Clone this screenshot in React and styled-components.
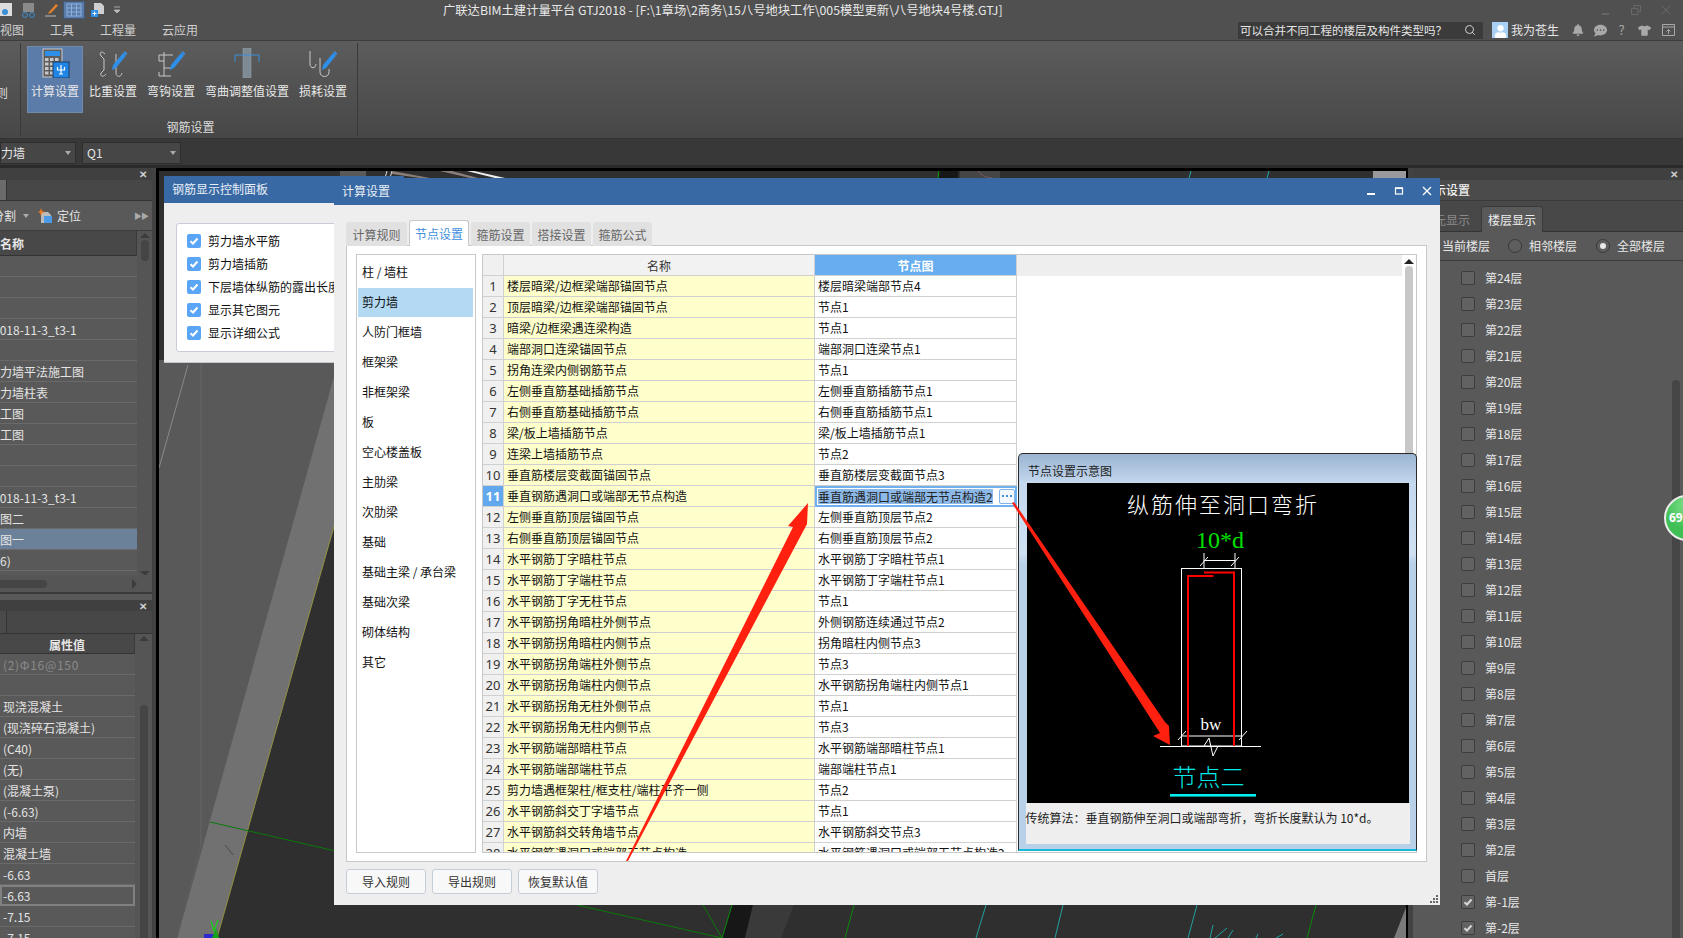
import React from 'react';
import styled, { createGlobalStyle } from 'styled-components';
import { Search } from 'lucide-react';
import { FaBell, FaCommentDots, FaTshirt, FaUser } from 'react-icons/fa';

const FONT = '"Noto Sans CJK SC", "Noto Sans", sans-serif';

const Global = createGlobalStyle`
  html, body { margin: 0; padding: 0; background: #2f2f2f; }
  body { font-family: ${FONT}; font-size: 12px; }
  * { box-sizing: border-box; }
`;

const Page = styled.div`
  position: relative; width: 1683px; height: 938px; overflow: hidden;
  display: flex; flex-direction: column; background: #2f2f2f; color: #e4e4e4;
  font-size: 12px; line-height: 16px;
`;

/* ---------- title bar ---------- */
const TitleBar = styled.div`
  height: 20px; background: #505050; position: relative; display: flex; align-items: center; justify-content: space-between;
`;
const QuickIcons = styled.div`display: flex; align-items: center; height: 20px;`;
const QuickBtn = styled.div`
  width: ${p => p.$w || 20}px; height: 18px; margin-left: ${p => p.$ml || 0}px; display: flex; align-items: center; justify-content: center;
  background: ${p => p.$on ? '#5b7ba8' : 'transparent'};
  border: ${p => p.$on ? '1px solid #3f5878' : '0'};
`;
const AppTitle = styled.div`
  position: absolute; left: 443px; top: 1px; white-space: nowrap; color: #e8e8e8; font-size: 12.3px; line-height: 18px;
`;
const WinGhost = styled.div`display: flex; gap: 20px; padding-right: 12px; align-items: center;`;

/* ---------- menu ---------- */
const MenuBar = styled.div`
  height: 21px; background: #505050; border-bottom: 1px solid #3c3c3c; display: flex; align-items: center; justify-content: space-between; padding-right: 5px;
`;
const MenuItems = styled.div`display: flex; gap: 26px;`;
const MenuItem = styled.span`color: #cfcfcf; font-size: 12px;`;
const MenuRight = styled.div`display: flex; align-items: center; height: 20px;`;
const SearchBox = styled.div`
  width: 245px; height: 17px; background: #3b3b3b; display: flex; align-items: center; justify-content: space-between; padding: 0 7px 0 2px; color: #e6e6e6; font-size: 11.5px;
`;
const Avatar = styled.div`
  width: 16px; height: 16px; margin-left: 9px; background: #a8d0f4; display: flex; align-items: flex-end; justify-content: center; color: #fff; overflow: hidden;
`;
const UserName = styled.span`margin-left: 3px; color: #e6e6e6; width: 48px; margin-right: 7px;`;
const RightIcon = styled.div`
  width: ${p => p.$w}px; display: flex; justify-content: center; align-items: center; color: #a9a9a9; font-size: 13px;
`;

/* ---------- ribbon ---------- */
const Ribbon = styled.div`
  height: 98px; background: linear-gradient(#5c5c5c, #474747); display: flex; padding-top: 2px; border-bottom: 1px solid #333;
`;
const RibbonStub = styled.div`
  width: 21px; height: 93px; border-right: 1px solid #3a3a3a; padding-top: 42px; overflow: hidden; color: #ddd; white-space: nowrap;
`;
const StubText = styled.span`margin-left: -4px; display: block;`;
const RibbonGroup = styled.div`
  height: 93px; border-right: 1px solid #3a3a3a; padding: 3px 6px 0 6px; display: flex; flex-direction: column; align-items: center;
`;
const RibbonBtns = styled.div`display: flex; gap: 2px;`;
const RibbonBtn = styled.div`
  width: ${p => p.$w || 56}px; height: 67px; display: flex; flex-direction: column; align-items: center; padding-top: 1px;
  background: ${p => p.$on ? '#5b7ba8' : 'transparent'};
  border: 1px solid ${p => p.$on ? '#7189ab' : 'transparent'};
  color: #e8e8e8;
`;
const RibbonLabel = styled.span`margin-top: 5px; white-space: nowrap;`;
const GroupLabel = styled.span`margin: 6px 0 0 3px; color: #dcdcdc;`;

/* ---------- toolbar ---------- */
const ToolRow = styled.div`
  height: 29px; background: #383838; border-bottom: 3px solid #2a2a2a; display: flex; gap: 6px; padding-top: 3px;
`;
const Combo = styled.div`
  width: ${p => p.$w}px; height: 22px; background: #464646; border: 1px solid #2e2e2e; display: flex; align-items: center; justify-content: space-between; padding: 0 4px; overflow: hidden; color: #e4e4e4; white-space: nowrap;
`;
const Clip = styled.span`margin-left: ${p => p.$shift || 0}px; white-space: nowrap;`;
const Caret = styled.i`
  width: 0; height: 0; border-left: 3px solid transparent; border-right: 3px solid transparent; border-top: 4px solid #aaa; flex: none;
`;

/* ---------- workspace ---------- */
const Workspace = styled.div`flex: 1; display: flex; min-height: 0;`;
const LeftDock = styled.div`width: 152px; display: flex; flex-direction: column; background: #595959;`;
const Splitter = styled.div`width: ${p => p.$w}px; background: #424242; flex: none;`;
const Viewport = styled.div`
  width: 1252px; flex: none; background: #000; border-left: 3px solid #000; border-right: 2px solid #000;
  svg { display: block; width: 1247px; height: 770px; }
`;
const RightDock = styled.div`width: 270px; display: flex; flex-direction: column; background: #595959; position: relative;`;

const DockPanel = styled.div`
  height: ${p => p.$h ? p.$h + 'px' : 'auto'}; flex: ${p => p.$h ? 'none' : 1}; display: flex; flex-direction: column; min-height: 0; overflow: hidden;
  border-bottom: ${p => p.$h ? '2px solid #3a3a3a' : '0'};
`;
const DockHead = styled.div`
  height: ${p => p.$h || 12}px; background: #404040; display: flex; align-items: center; justify-content: flex-end; padding-right: 5px; flex: none; margin-top: ${p => p.$mt || 0}px;
`;
const CloseGlyph = styled.span`color: #d0d0d0; font-size: 10px; line-height: 10px; font-weight: 700;`;
const TabStrip = styled.div`
  height: 21px; background: #474747; border-bottom: 1px solid #333; flex: none; display: flex;
`;
const StripCell = styled.div`width: ${p => p.$w}px; background: ${p => p.$c}; border-right: 1px solid #333;`;
const LocRow = styled.div`
  height: 30px; flex: none; display: flex; align-items: center; background: #595959; border-bottom: 1px solid #3c3c3c; padding-right: 4px; color: #e4e4e4; position: relative;
`;
const LocIcon = styled.span`margin-left: 9px; display: flex;`;
const LocLabel = styled.span`margin-left: 4px;`;
const Chevrons = styled.span`margin-left: auto; color: #aaa; font-size: 8px; letter-spacing: -1px;`;
const TableWrap = styled.div`flex: 1; display: flex; min-height: 0;`;
const RowsCol = styled.div`width: ${p => p.$w}px; flex: none; overflow: hidden; display: flex; flex-direction: column;`;
const HeadCell = styled.div`
  height: ${p => p.$h}px; flex: none; background: #484848; border-bottom: 1px solid #333; border-right: 1px solid #3a3a3a; display: flex; align-items: center; font-weight: 700; color: #e6e6e6; padding-top: 2px;
  justify-content: ${p => p.$center ? 'center' : 'flex-start'};
`;
const DockRow = styled.div`
  height: 21px; flex: none; display: flex; align-items: center; white-space: nowrap; overflow: hidden;
  border-bottom: 1px solid #6a6a6a; color: ${p => p.$dim ? '#8a8a8a' : '#e4e4e4'};
  background: ${p => p.$sel ? '#6b8099' : 'transparent'};
  outline: ${p => p.$box ? '2px solid #808080' : '0'}; outline-offset: -2px;
  padding: 2px 0 0 ${p => p.$pl || 0}px;
  letter-spacing: ${p => p.$dim ? '.7px' : '0'};
`;
const VScroll = styled.div`width: 15px; flex: none; display: flex; flex-direction: column; align-items: center; padding-top: 2px; background: #555;`;
const ArrowUp = styled.i`
  width: 0; height: 0; border-left: 5px solid transparent; border-right: 5px solid transparent; border-bottom: 5px solid ${p => p.$c || '#3c3c3c'}; flex: none;
`;
const ArrowDown = styled.i`
  width: 0; height: 0; border-left: 5px solid transparent; border-right: 5px solid transparent; border-top: 5px solid #3c3c3c; flex: none; margin-top: ${p => p.$mt}px;
`;
const Thumb = styled.div`
  width: 8px; height: ${p => p.$h}px; margin-top: ${p => p.$mt}px; background: ${p => p.$c || '#454545'}; border-radius: 4px; flex: none;
`;
const HScroll = styled.div`
  height: 17px; flex: none; background: #555; display: flex; align-items: center; justify-content: space-between; padding: 0 15px 0 0;
`;
const HThumb = styled.div`width: 47px; height: 8px; background: #454545; border-radius: 0 4px 4px 0;`;
const ArrowRight = styled.i`
  width: 0; height: 0; border-top: 5px solid transparent; border-bottom: 5px solid transparent; border-left: 5px solid #3c3c3c;
`;

/* right dock */
const RDTitle = styled.div`
  height: 21px; flex: none; background: #4b4b4b; border-bottom: 1px solid #3a3a3a; padding-left: 21px; display: flex; align-items: center; color: #f0f0f0; font-weight: 500;
`;
const RDTabs = styled.div`
  height: 31px; flex: none; background: #484848; border-bottom: 1px solid #333; display: flex; align-items: flex-end; padding-left: 21px;
`;
const RDTab = styled.div`
  height: ${p => p.$on ? 26 : 25}px; width: ${p => p.$w}px; display: flex; align-items: center; justify-content: ${p => p.$on ? 'center' : 'flex-start'};
  color: ${p => p.$on ? '#eee' : '#8a8a8a'}; background: ${p => p.$on ? '#595959' : 'transparent'};
  border: ${p => p.$on ? '1px solid #3a3a3a' : '0'}; border-bottom: 0; border-radius: 3px 3px 0 0;
  margin-bottom: -1px;
`;
const RDOptions = styled.div`
  height: 29px; flex: none; border-bottom: 1px solid #3a3a3a; display: flex; align-items: center; padding-left: 29px; color: #e8e8e8;
`;
const Radio = styled.span`
  width: 14px; height: 14px; border-radius: 50%; border: 1px solid #3a3a3a; background: #5e5e5e; margin: 0 7px 0 ${p => p.$ml}px; display: flex; align-items: center; justify-content: center; flex: none;
  &::after { content: ''; width: 6px; height: 6px; border-radius: 50%; background: ${p => p.$on ? '#e8e8e8' : 'transparent'}; }
`;
const RDBody = styled.div`flex: 1; display: flex; min-height: 0;`;
const FloorList = styled.div`width: 259px; padding: 4px 0 0 48px; display: flex; flex-direction: column;`;
const FloorRow = styled.div`height: 26px; flex: none; display: flex; align-items: center; color: #e8e8e8;`;
const FloorBox = styled.span`
  width: 14px; height: 14px; border: 1px solid #3d3d3d; border-radius: 2px; background: #626262; margin-right: 10px; display: flex; align-items: center; justify-content: center; flex: none;
`;
const RDScroll = styled.div`width: 11px; flex: none; padding-top: 119px;`;
const RDThumb = styled.div`width: 8px; height: 100%; background: #464646; border-radius: 4px 4px 0 0;`;

/* ---------- floating windows ---------- */
const CtrlPanel = styled.div`
  position: absolute; left: 164px; top: 176px; width: 240px; height: 187px; background: #eeeeee; display: flex; flex-direction: column;
  border-bottom: 1px solid #c4c8d0;
`;
const WinTitle = styled.div`
  height: 27px; flex: none; background: #3869a4; color: #e8eef6; display: flex; align-items: center; justify-content: space-between; font-size: 12px;
  padding: 0 ${p => p.$pr || 0}px 2px 8px;
`;
const CtrlBox = styled.div`
  margin: 20px 0 0 12px; height: 129px; background: #fff; border: 1px solid #c8ccd6; border-radius: 3px; padding: 9px 0 0 10px; display: flex; flex-direction: column; gap: 7px; overflow: hidden;
`;
const CtrlRow = styled.div`height: 16px; display: flex; align-items: center; color: #111; white-space: nowrap;`;
const BlueCheck = styled.span`
  width: 14px; height: 14px; background: #5aa5f5; border-radius: 2px; margin-right: 7px; display: flex; align-items: center; justify-content: center; flex: none;
`;

const Dialog = styled.div`
  position: absolute; left: 334px; top: 178px; width: 1106px; height: 727px; background: #eeeeee; display: flex; flex-direction: column;
`;
const WinCtrls = styled.div`display: flex; align-items: center; gap: 18px; padding-right: 8px;`;
const TabRow = styled.div`display: flex; gap: 2px; padding: 15px 0 0 12px; height: 40px; flex: none; align-items: flex-end;`;
const Tab = styled.div`
  width: ${p => p.$w || 59}px; height: ${p => p.$on ? 26 : 24}px; display: flex; align-items: center; justify-content: center;
  background: ${p => p.$on ? '#fff' : '#e1e1e1'}; color: ${p => p.$on ? '#3f8fdc' : '#666'};
  border: 1px solid ${p => p.$on ? '#c8c8c8' : '#e1e1e1'}; border-bottom: 0; border-radius: 3px 3px 0 0; margin-bottom: -1px; position: relative; z-index: ${p => p.$on ? 1 : 0};
`;
const TabBody = styled.div`
  margin: 0 13px 0 12px; height: 617px; flex: none; background: #fff; border: 1px solid #c8c8c8; padding: 8px 9px 8px 9px; display: flex; gap: 6px;
`;
const SideList = styled.div`
  width: 120px; flex: none; border: 1px solid #c8c8c8; padding: 2px 2px 0 1px; display: flex; flex-direction: column; color: #111;
`;
const SideItem = styled.div`
  height: 30px; flex: none; display: flex; align-items: center; padding-left: 4px; white-space: nowrap; background: ${p => p.$on ? 'linear-gradient(transparent 1px, #b3d9f3 1px)' : 'transparent'};
`;
const GridFrame = styled.div`
  flex: 1; border: 1px solid #c8c8c8; display: flex; overflow: hidden; min-width: 0;
`;
const GridArea = styled.div`flex: 1; overflow: hidden; display: flex; flex-direction: column; min-width: 0;`;
const GridRow = styled.div`
  display: grid; grid-template-columns: 21px 311px 202px 1fr; height: 21px; flex: none;
`;
const IdxCell = styled.div`
  background: ${p => p.$on ? '#62a8ee' : '#f0f0f0'}; color: ${p => p.$on ? '#fff' : '#333'}; font-weight: ${p => p.$on ? 700 : 400}; font-size: 13px;
  border-right: 1px solid #d0d0d0; border-bottom: 1px solid #d0d0d0; display: flex; align-items: center; justify-content: center; font-family: "Noto Sans", sans-serif;
`;
const NameCell = styled.div`
  background: #ffffcc; color: #111; border-right: 1px solid #d0d0d0; border-bottom: 1px solid #d0d0d0; display: flex; align-items: center; padding-left: 3px; white-space: nowrap; overflow: hidden;
`;
const NodeCell = styled.div`
  background: #fff; color: #111; border-right: 1px solid #d0d0d0; border-bottom: 1px solid #d0d0d0; display: flex; align-items: center; padding-left: 3px; white-space: nowrap; overflow: hidden;
`;
const NodeEdit = styled.div`
  background: #fff; border: 2px solid #6fb0ee; display: flex; align-items: center; padding-left: 1px; white-space: nowrap; overflow: hidden; color: #222; justify-content: space-between;
`;
const Highlight = styled.span`background: #8cb9e8; line-height: 15px;`;
const DotsBtn = styled.span`
  width: 16px; height: 15px; border: 1px solid #7fb5ea; border-radius: 2px; background: #f4f9ff; display: flex; align-items: center; justify-content: center; flex: none;
`;
const HeadName = styled.div`
  background: #f2f2f2; color: #333; border-right: 1px solid #d0d0d0; border-bottom: 1px solid #d0d0d0; display: flex; align-items: center; justify-content: center; padding-top: 1px;
`;
const HeadNode = styled.div`
  background: #66aef0; color: #fff; font-weight: 700; border-right: 1px solid #d0d0d0; border-bottom: 1px solid #d0d0d0; display: flex; align-items: center; justify-content: center; padding-top: 1px;
`;
const HeadRest = styled.div`background: #eeeeee; margin-right: 0;`;
const GridScroll = styled.div`width: 14px; flex: none; display: flex; flex-direction: column; align-items: center; padding-top: 4px; background: #fff;`;
const BtnRow = styled.div`display: flex; gap: 6px; padding: 7px 0 0 12px;`;
const ActionBtn = styled.div`
  width: 80px; height: 25px; background: #f8f8f8; border: 1px solid #c5cdd8; border-radius: 3px; display: flex; align-items: center; justify-content: center; color: #333;
`;
const Grip = styled.svg`position: absolute; right: 2px; bottom: 2px;`;

const Diagram = styled.div`
  position: absolute; left: 1018px; top: 453px; width: 399px; height: 398px; border: 1px solid #2a2a2a; border-bottom-color: #18b8dc; border-bottom-width: 2px; border-radius: 5px 5px 0 0;
  background: linear-gradient(#9ab4d2, #c4d8ee 29px, #cfe0f2 100px, #b8d0e8 110px); display: flex; flex-direction: column; align-items: center;
`;
const DiagramTitle = styled.div`height: 29px; width: 100%; flex: none; padding-left: 9px; display: flex; align-items: center; color: #222; padding-top: 4px;`;
const DiagramCanvas = styled.svg`display: block; width: 382px; height: 320px; background: #000; flex: none;`;
const DiagramNote = styled.div`width: 384px; height: 41px; flex: none; background: #eeeeee; color: #222; padding-top: 7px; white-space: nowrap;`;

const Badge = styled.div`
  position: absolute; left: 1664px; top: 495px; width: 46px; height: 46px; border-radius: 50%; border: 2px solid #ececec;
  background: radial-gradient(circle at 50% 20%, #7fe08a, #3fbf55 60%); color: #fff; font-weight: 700; font-family: "Noto Sans", sans-serif; font-size: 12px; display: flex; align-items: center; padding-left: 3px;
`;
const Overlay = styled.svg`position: absolute; left: 0; top: 0; pointer-events: none;`;

/* ---------- data ---------- */
const leftRows = [
  {}, {}, {}, { t: '2018-11-3_t3-1', s: -7 }, {},
  { t: '剪力墙平法施工图', s: -12 }, { t: '剪力墙柱表', s: -12 }, { t: '施工图', s: -12 }, { t: '施工图', s: -12 }, {}, {},
  { t: '2018-11-3_t3-1', s: -7 }, { t: '详图二', s: -12 }, { t: '详图一', s: -12, sel: true }, { t: '(6)', s: -4 }, { t: '剪力墙柱表', s: -6 },
];
const propRows = [
  { t: '(2)Φ16@150', dim: true }, {}, { t: '现浇混凝土' }, { t: '(现浇碎石混凝土)' }, { t: '(C40)' }, { t: '(无)' }, { t: '(混凝土泵)' },
  { t: '(-6.63)' }, { t: '内墙' }, { t: '混凝土墙' }, { t: '-6.63' }, { t: '-6.63', box: true }, { t: '-7.15' }, { t: '-7.15' },
];
const sideItems = ['柱 / 墙柱', '剪力墙', '人防门框墙', '框架梁', '非框架梁', '板', '空心楼盖板', '主肋梁', '次肋梁', '基础', '基础主梁 / 承台梁', '基础次梁', '砌体结构', '其它'];
const rows = [
  ['楼层暗梁/边框梁端部锚固节点', '楼层暗梁端部节点4'],
  ['顶层暗梁/边框梁端部锚固节点', '节点1'],
  ['暗梁/边框梁遇连梁构造', '节点1'],
  ['端部洞口连梁锚固节点', '端部洞口连梁节点1'],
  ['拐角连梁内侧钢筋节点', '节点1'],
  ['左侧垂直筋基础插筋节点', '左侧垂直筋插筋节点1'],
  ['右侧垂直筋基础插筋节点', '右侧垂直筋插筋节点1'],
  ['梁/板上墙插筋节点', '梁/板上墙插筋节点1'],
  ['连梁上墙插筋节点', '节点2'],
  ['垂直筋楼层变截面锚固节点', '垂直筋楼层变截面节点3'],
  ['垂直钢筋遇洞口或端部无节点构造', '垂直筋遇洞口或端部无节点构造2'],
  ['左侧垂直筋顶层锚固节点', '左侧垂直筋顶层节点2'],
  ['右侧垂直筋顶层锚固节点', '右侧垂直筋顶层节点2'],
  ['水平钢筋丁字暗柱节点', '水平钢筋丁字暗柱节点1'],
  ['水平钢筋丁字端柱节点', '水平钢筋丁字端柱节点1'],
  ['水平钢筋丁字无柱节点', '节点1'],
  ['水平钢筋拐角暗柱外侧节点', '外侧钢筋连续通过节点2'],
  ['水平钢筋拐角暗柱内侧节点', '拐角暗柱内侧节点3'],
  ['水平钢筋拐角端柱外侧节点', '节点3'],
  ['水平钢筋拐角端柱内侧节点', '水平钢筋拐角端柱内侧节点1'],
  ['水平钢筋拐角无柱外侧节点', '节点1'],
  ['水平钢筋拐角无柱内侧节点', '节点3'],
  ['水平钢筋端部暗柱节点', '水平钢筋端部暗柱节点1'],
  ['水平钢筋端部端柱节点', '端部端柱节点1'],
  ['剪力墙遇框架柱/框支柱/端柱平齐一侧', '节点2'],
  ['水平钢筋斜交丁字墙节点', '节点1'],
  ['水平钢筋斜交转角墙节点', '水平钢筋斜交节点3'],
  ['水平钢筋遇洞口或端部无节点构造', '水平钢筋遇洞口或端部无节点构造2'],
];
const floors = [];
for (let i = 24; i >= 2; i--) floors.push({ t: `第${i}层` });
floors.push({ t: '首层' }, { t: '第-1层', on: true }, { t: '第-2层', on: true });

/* ---------- icons ---------- */
const Pencil = () => (
  <g>
    <path d="M15 17 L25 5 L28 7.5 L18 20 L14 22 Z" fill="#2f8fe8" />
    <path d="M25 5 L26.5 3 L29.5 5.5 L28 7.5 Z" fill="#2f8fe8" stroke="#6a6a6a" strokeWidth=".4" />
  </g>
);
const CalcIcon = () => (
  <svg width="30" height="30" viewBox="0 0 30 30">
    <rect x="3" y="1" width="19" height="28" fill="#5d5d5d" stroke="#ccc" />
    <rect x="5" y="3" width="15" height="5" fill="#2f8fe8" />
    {[10, 14.5, 19, 23.5].map(y => [5, 10, 15].map(x => <rect key={x + '-' + y} x={x} y={y} width="3.5" height="3" fill="#c8c8c8" />))}
    <rect x="13" y="14" width="16" height="16" fill="#1f86e6" stroke="#1c3d66" />
    <path d="M21 17v9M17.5 19v3h7v-3M19 26h4" stroke="#fff" strokeWidth="1.2" fill="none" />
  </svg>
);
const HookA = () => (
  <svg width="30" height="30" viewBox="0 0 30 30">
    <path d="M7 6 C3 2 1 5 3 8 L6 11 V22 L3 25 C2 28 5 30 8 26" fill="none" stroke="#c8c8c8" />
    <path d="M18 6 V25 C18 29 23 30 24 25" fill="none" stroke="#c8c8c8" />
    <Pencil />
  </svg>
);
const HookB = () => (
  <svg width="30" height="30" viewBox="0 0 30 30">
    <path d="M3 7 H17 M3 7 V13 H8 M8 4 V28 M3 28 H15 M3 24 L3 28 M8 20 H15" fill="none" stroke="#c8c8c8" />
    <Pencil />
  </svg>
);
const BendIcon = () => (
  <svg width="30" height="30" viewBox="0 0 30 30">
    <rect x="11" y="0" width="8" height="30" fill="#7d8a94" stroke="#98a4ac" strokeWidth=".5" />
    <path d="M3 14 V7 H27 V14" fill="none" stroke="#3a8fd8" />
  </svg>
);
const HookC = () => (
  <svg width="30" height="30" viewBox="0 0 30 30">
    <path d="M2 3 V16 C2 21 8 21 8 16 M12 10 V24 C12 30 21 30 21 24 V21" fill="none" stroke="#c8c8c8" />
    <Pencil />
  </svg>
);
const Tick = ({ c = '#fff', s = 10 }) => (
  <svg width={s} height={s} viewBox="0 0 10 10"><path d="M1.5 5.2 L4 7.5 L8.5 2.5" fill="none" stroke={c} strokeWidth="2" /></svg>
);

const Quick = () => (
  <QuickIcons>
    <QuickBtn $w={13}>
      <svg width="13" height="16" viewBox="0 0 13 16"><rect x="0" y="1" width="12" height="13" fill="#ddd" /><circle cx="5" cy="10" r="3" fill="#3a8fd8" /></svg>
    </QuickBtn>
    <QuickBtn $w={16} $ml={7}>
      <svg width="15" height="16" viewBox="0 0 15 16"><rect x="2" y="1" width="11" height="9" fill="#8a8a8a" /><circle cx="4" cy="13" r="2.4" fill="none" stroke="#3a8fd8" /><circle cx="11" cy="13" r="2.4" fill="none" stroke="#3a8fd8" /></svg>
    </QuickBtn>
    <QuickBtn $w={16} $ml={7}>
      <svg width="15" height="16" viewBox="0 0 15 16"><path d="M5 10 L12 2 L14 3.5 L7 11 L4 12 Z" fill="#e8822a" /><path d="M1 14 H12" stroke="#bbb" /></svg>
    </QuickBtn>
    <QuickBtn $w={22} $ml={4} $on>
      <svg width="16" height="14" viewBox="0 0 16 14"><path d="M1 1H15V13H1ZM1 5H15M1 9H15M5.5 1V13M10.5 1V13" fill="none" stroke="#8ab0dd" /></svg>
    </QuickBtn>
    <QuickBtn $w={16} $ml={5}>
      <svg width="14" height="16" viewBox="0 0 14 16"><path d="M3 1H10L13 4V12H3Z" fill="#cfcfcf" /><rect x="0" y="8" width="7" height="7" fill="#2f8fe8" /><path d="M3.5 9.5v4M1.5 11.5h4" stroke="#fff" /></svg>
    </QuickBtn>
    <QuickBtn $w={8} $ml={7}>
      <svg width="6" height="8" viewBox="0 0 6 8"><path d="M0 1H6M0 4L3 7L6 4Z" stroke="#bbb" fill="#bbb" strokeWidth=".8" /></svg>
    </QuickBtn>
  </QuickIcons>
);

const Scene = () => (
  <svg viewBox="159 168 1247 770" preserveAspectRatio="none">
    <rect x="159" y="168" width="1247" height="770" fill="#2f2f2f" />
    <rect x="159" y="168" width="1247" height="3" fill="#000" />
    {/* wall faces */}
    <rect x="340" y="171" width="26" height="7" fill="#5a5a5a" />
    <polygon points="159,360 340,360 177,938 159,938" fill="#595959" />
    <polygon points="340,355 340,507 217,938 177,938" fill="#717171" />
    <line x1="340" y1="505" x2="217" y2="938" stroke="#8f8f3f" strokeWidth="1" />
    <line x1="201" y1="360" x2="201" y2="845" stroke="#666" />
    <line x1="201" y1="845" x2="177" y2="938" stroke="#5f5f5f" />
    <line x1="188" y1="365" x2="159" y2="468" stroke="#8a8a8a" />
    <line x1="210" y1="822" x2="340" y2="852" stroke="#0a7a0a" />
    <line x1="225" y1="845" x2="233" y2="855" stroke="#4a4a4a" />
    {/* axis */}
    <path d="M214 931 L218 920 M214 931 L211 921" stroke="#17d317" strokeWidth="1.2" fill="none" />
    <polygon points="204,934 214,934 214,938 204,938" fill="#2a2ad0" />
    <polygon points="212,938 216,928 219,938" fill="#17a317" />
    {/* top strip */}
    <path d="M387 171 L385 178 M392 171 L390 178" stroke="#ddd" />
    <polygon points="392,171 430,178 420,178 392,174" fill="#8a7f78" />
    <polygon points="440,171 452,171 478,178 470,178" fill="#8a7f78" />
    <polygon points="467,171 474,171 505,178 495,178" fill="#f0f0f0" />
    <rect x="938" y="171" width="20" height="7" fill="#171717" />
    <line x1="939" y1="171" x2="938" y2="178" stroke="#0ca50c" />
    <rect x="960" y="171" width="40" height="7" fill="#454545" />
    <path d="M978 171 Q982 177 992 178" stroke="#7a5a5a" fill="none" />
    <line x1="1191" y1="171" x2="1189" y2="178" stroke="#22a8a8" />
    <line x1="1269" y1="171" x2="1267" y2="178" stroke="#22a8a8" />
    <rect x="1373" y="171" width="33" height="7" fill="#9a9a9e" />
    {/* bottom strip */}
    <line x1="577" y1="905" x2="722" y2="938" stroke="#0a7a0a" />
    <line x1="703" y1="905" x2="722" y2="938" stroke="#0a7a0a" />
    <polygon points="732,905 753,905 745,938 722,938" fill="#171717" />
    <polygon points="753,905 794,905 781,938 745,938" fill="#3a3a3a" />
    <line x1="732" y1="905" x2="722" y2="938" stroke="#0a8a0a" />
    <line x1="854" y1="905" x2="845" y2="938" stroke="#0a8a0a" />
    <line x1="986" y1="905" x2="976" y2="938" stroke="#22a0a0" />
    <line x1="1063" y1="905" x2="1055" y2="938" stroke="#22a0a0" />
    <line x1="1197" y1="905" x2="1188" y2="938" stroke="#22a0a0" />
    <line x1="1316" y1="905" x2="1307" y2="938" stroke="#0a8a0a" />
    <path d="M1213 925 L1210 938 M1227 928 L1215 938 M1233 930 L1228 938 M1258 934 L1256 938 M1283 934 L1276 938" stroke="#22a0a0" fill="none" />
    <polygon points="1407,905 1406,938 1394,938" fill="#7a7a7a" />
  </svg>
);

const DiagramSvg = () => (
  <DiagramCanvas viewBox="0 0 382 320">
    <text x="196" y="30" textAnchor="middle" fill="#fff" fontSize="22" letterSpacing="2" fontFamily={FONT} fontWeight="300">纵筋伸至洞口弯折</text>
    <text x="193" y="65" textAnchor="middle" fill="#00e000" fontSize="24" fontFamily='"Liberation Serif", serif'>10*d</text>
    <g stroke="#fff" strokeWidth="1" fill="none">
      <path d="M177 70 V85 M208 70 V85 M177 77.5 H208" />
      <path d="M173 83 L181 74 M204 83 L212 74" />
      <rect x="154.5" y="85.5" width="60" height="177.5" />
      <path d="M154 253 H214 M133 263.5 H234" />
      <path d="M151 257 L159 248 M212 257 L220 248" />
      <path d="M177 263 L182 255 L186 273 L191 263" />
    </g>
    <path d="M161 263 V93 H186.5" fill="none" stroke="#ff0000" strokeWidth="2" />
    <path d="M207 263 V89.5 H177" fill="none" stroke="#ff0000" strokeWidth="2" />
    <text x="184" y="247" textAnchor="middle" fill="#fff" fontSize="17" fontFamily='"Liberation Serif", serif'>bw</text>
    <text x="181.5" y="303" textAnchor="middle" fill="#00e8e8" fontSize="24" fontFamily={FONT} fontWeight="300">节点二</text>
    <rect x="143" y="311" width="86" height="2.6" fill="#00f0f0" />
  </DiagramCanvas>
);

const WinMin = () => <svg width="10" height="10" viewBox="0 0 10 10"><rect x="1" y="7" width="8" height="2" fill="#fff" /></svg>;
const WinMax = () => <svg width="10" height="10" viewBox="0 0 10 10"><rect x="1.5" y="2" width="7" height="6" fill="none" stroke="#fff" strokeWidth="1.2" /><rect x="1" y="1.5" width="8" height="1.5" fill="#fff" /></svg>;
const WinClose = () => <svg width="10" height="10" viewBox="0 0 10 10"><path d="M1 1L9 9M9 1L1 9" stroke="#fff" strokeWidth="1.3" /></svg>;

export default function App() {
  return (
    <Page>
      <Global />
      <TitleBar>
        <Quick />
        <AppTitle>广联达BIM土建计量平台 GTJ2018 - [F:\1章场\2商务\15八号地块工作\005模型更新\八号地块4号楼.GTJ]</AppTitle>
        <WinGhost>
          <svg width="10" height="10" viewBox="0 0 10 10"><rect x="1" y="8" width="7" height="2" fill="#666" /></svg>
          <svg width="10" height="10" viewBox="0 0 10 10"><path d="M.5 3.5H7V9.500H.5ZM3 3V.5H9.500V6.500H7" fill="none" stroke="#686868" /></svg>
          <svg width="10" height="10" viewBox="0 0 10 10"><path d="M1 1L9 9M9 1L1 9" stroke="#686868" /></svg>
        </WinGhost>
      </TitleBar>

      <MenuBar>
        <MenuItems>
          <MenuItem>视图</MenuItem><MenuItem>工具</MenuItem><MenuItem>工程量</MenuItem><MenuItem>云应用</MenuItem>
        </MenuItems>
        <MenuRight>
          <SearchBox>可以合并不同工程的楼层及构件类型吗？<Search size={12} color="#cfcfcf" /></SearchBox>
          <Avatar><FaUser size={13} /></Avatar>
          <UserName>我为苍生</UserName>
          <RightIcon $w={23}><FaBell size={12} /></RightIcon>
          <RightIcon $w={23}><FaCommentDots size={13} /></RightIcon>
          <RightIcon $w={19}>?</RightIcon>
          <RightIcon $w={27}><FaTshirt size={13} /></RightIcon>
          <RightIcon $w={20}>
            <svg width="13" height="12" viewBox="0 0 13 12"><path d="M.5.5H12.500V11.500H.5ZM.5 3H12.500" fill="none" stroke="#a9a9a9" /><path d="M6.500 10V5.500M4.500 7.500L6.500 5.500L8.500 7.500" fill="none" stroke="#a9a9a9" /></svg>
          </RightIcon>
        </MenuRight>
      </MenuBar>

      <Ribbon>
        <RibbonStub><StubText>则</StubText></RibbonStub>
        <RibbonGroup>
          <RibbonBtns>
            <RibbonBtn $on><CalcIcon /><RibbonLabel>计算设置</RibbonLabel></RibbonBtn>
            <RibbonBtn><HookA /><RibbonLabel>比重设置</RibbonLabel></RibbonBtn>
            <RibbonBtn><HookB /><RibbonLabel>弯钩设置</RibbonLabel></RibbonBtn>
            <RibbonBtn $w={92}><BendIcon /><RibbonLabel>弯曲调整值设置</RibbonLabel></RibbonBtn>
            <RibbonBtn><HookC /><RibbonLabel>损耗设置</RibbonLabel></RibbonBtn>
          </RibbonBtns>
          <GroupLabel>钢筋设置</GroupLabel>
        </RibbonGroup>
      </Ribbon>

      <ToolRow>
        <Combo $w={76}><Clip $shift={-16}>剪力墙</Clip><Caret /></Combo>
        <Combo $w={99}><span>Q1</span><Caret /></Combo>
      </ToolRow>

      <Workspace>
        <LeftDock>
          <DockPanel $h={426}>
            <DockHead><CloseGlyph>✕</CloseGlyph></DockHead>
            <TabStrip><StripCell $w={7} $c="#6b6b6b" /></TabStrip>
            <LocRow>
              <Clip $shift={-8}>分割</Clip>
              <Caret style={{ marginLeft: 7 }} />
              <LocIcon>
                <svg width="15" height="16" viewBox="0 0 15 16"><path d="M3 4 H10 L13 7 V15 H3 Z" fill="#bcbcbc" /><rect x="6" y="8" width="8" height="7" fill="#4c9ae8" /><path d="M3 0 L4 3 L7 4 L4 5 L3 8 L2 5 L0 4 L2 3 Z" fill="#ee7a22" /></svg>
              </LocIcon>
              <LocLabel>定位</LocLabel>
              <Chevrons>▶▶</Chevrons>
            </LocRow>
            <TableWrap>
              <RowsCol $w={137}>
                <HeadCell $h={25}>名称</HeadCell>
                {leftRows.map((r, i) => (
                  <DockRow key={i} $sel={r.sel}>{r.t && <Clip $shift={r.s}>{r.t}</Clip>}</DockRow>
                ))}
              </RowsCol>
              <VScroll>
                <ArrowUp />
                <Thumb $h={21} $mt={2} />
                <ArrowDown $mt={310} />
              </VScroll>
            </TableWrap>
            <HScroll><HThumb /><ArrowRight /></HScroll>
          </DockPanel>
          <DockPanel>
            <DockHead $mt={6} $h={11}><CloseGlyph>✕</CloseGlyph></DockHead>
            <TabStrip style={{ height: 23 }}><StripCell $w={7} $c="#4a4a4a" /></TabStrip>
            <TableWrap>
              <RowsCol $w={135}>
                <HeadCell $h={20} $center>属性值</HeadCell>
                {propRows.map((r, i) => (
                  <DockRow key={i} $dim={r.dim} $box={r.box} $pl={3}>{r.t}</DockRow>
                ))}
              </RowsCol>
              <VScroll style={{ width: 17 }}>
                <ArrowUp />
                <Thumb $h={300} $mt={64} />
              </VScroll>
            </TableWrap>
          </DockPanel>
        </LeftDock>
        <Splitter $w={4} />
        <Viewport><Scene /></Viewport>
        <Splitter $w={5} />
        <RightDock>
          <DockHead><CloseGlyph>✕</CloseGlyph></DockHead>
          <RDTitle>示设置</RDTitle>
          <RDTabs>
            <RDTab $w={47}>元显示</RDTab>
            <RDTab $w={62} $on>楼层显示</RDTab>
          </RDTabs>
          <RDOptions>
            <span>当前楼层</span>
            <Radio $ml={18} />
            <span>相邻楼层</span>
            <Radio $ml={19} $on />
            <span>全部楼层</span>
          </RDOptions>
          <RDBody>
            <FloorList>
              {floors.map(f => (
                <FloorRow key={f.t}>
                  <FloorBox>{f.on && <Tick c="#d8d8d8" />}</FloorBox>{f.t}
                </FloorRow>
              ))}
            </FloorList>
            <RDScroll><RDThumb /></RDScroll>
          </RDBody>
        </RightDock>
      </Workspace>

      <CtrlPanel>
        <WinTitle>钢筋显示控制面板</WinTitle>
        <CtrlBox>
          {['剪力墙水平筋', '剪力墙插筋', '下层墙体纵筋的露出长度', '显示其它图元', '显示详细公式'].map(t => (
            <CtrlRow key={t}><BlueCheck><Tick /></BlueCheck>{t}</CtrlRow>
          ))}
        </CtrlBox>
      </CtrlPanel>

      <Dialog>
        <WinTitle $pr={0}>
          <span>计算设置</span>
          <WinCtrls><WinMin /><WinMax /><WinClose /></WinCtrls>
        </WinTitle>
        <TabRow>
          <Tab $w={61}>计算规则</Tab><Tab $on $w={60}>节点设置</Tab><Tab>箍筋设置</Tab><Tab>搭接设置</Tab><Tab>箍筋公式</Tab>
        </TabRow>
        <TabBody>
          <SideList>
            {sideItems.map(t => <SideItem key={t} $on={t === '剪力墙'}>{t}</SideItem>)}
          </SideList>
          <GridFrame>
            <GridArea>
              <GridRow>
                <IdxCell />
                <HeadName>名称</HeadName>
                <HeadNode>节点图</HeadNode>
                <HeadRest />
              </GridRow>
              {rows.map((r, i) => (
                <GridRow key={i}>
                  <IdxCell $on={i === 10}>{i + 1}</IdxCell>
                  <NameCell>{r[0]}</NameCell>
                  {i === 10
                    ? <NodeEdit><Highlight>{r[1]}</Highlight><DotsBtn><svg width="10" height="3" viewBox="0 0 10 3"><path d="M0 0h2v2H0zM4 0h2v2H4zM8 0h2v2H8z" fill="#3f8fdc" /></svg></DotsBtn></NodeEdit>
                    : <NodeCell>{r[1]}</NodeCell>}
                </GridRow>
              ))}
            </GridArea>
            <GridScroll>
              <ArrowUp $c="#222" />
              <Thumb $h={400} $mt={2} $c="#c8c8c8" />
            </GridScroll>
          </GridFrame>
        </TabBody>
        <BtnRow>
          <ActionBtn>导入规则</ActionBtn><ActionBtn>导出规则</ActionBtn><ActionBtn>恢复默认值</ActionBtn>
        </BtnRow>
        <Grip width="9" height="9" viewBox="0 0 9 9"><path d="M7 1h2v2H7zM4 4h2v2H4zM7 4h2v2H7zM1 7h2v2H1zM4 7h2v2H4zM7 7h2v2H7z" fill="#666" /></Grip>
      </Dialog>

      <Diagram>
        <DiagramTitle>节点设置示意图</DiagramTitle>
        <DiagramSvg />
        <DiagramNote>传统算法：垂直钢筋伸至洞口或端部弯折，弯折长度默认为 10*d。</DiagramNote>
      </Diagram>

      <Badge>69</Badge>

      <Overlay width="1683" height="938" viewBox="0 0 1683 938">
        <polygon fill="#ff2010" points="1012,503 1014,502 1165,722 1169,726 1170,745 1153,736 1160,733" />
        <polygon fill="#ff2010" points="808,503 807,524 628,861 626,861 793,527 788,526" />
      </Overlay>
    </Page>
  );
}
